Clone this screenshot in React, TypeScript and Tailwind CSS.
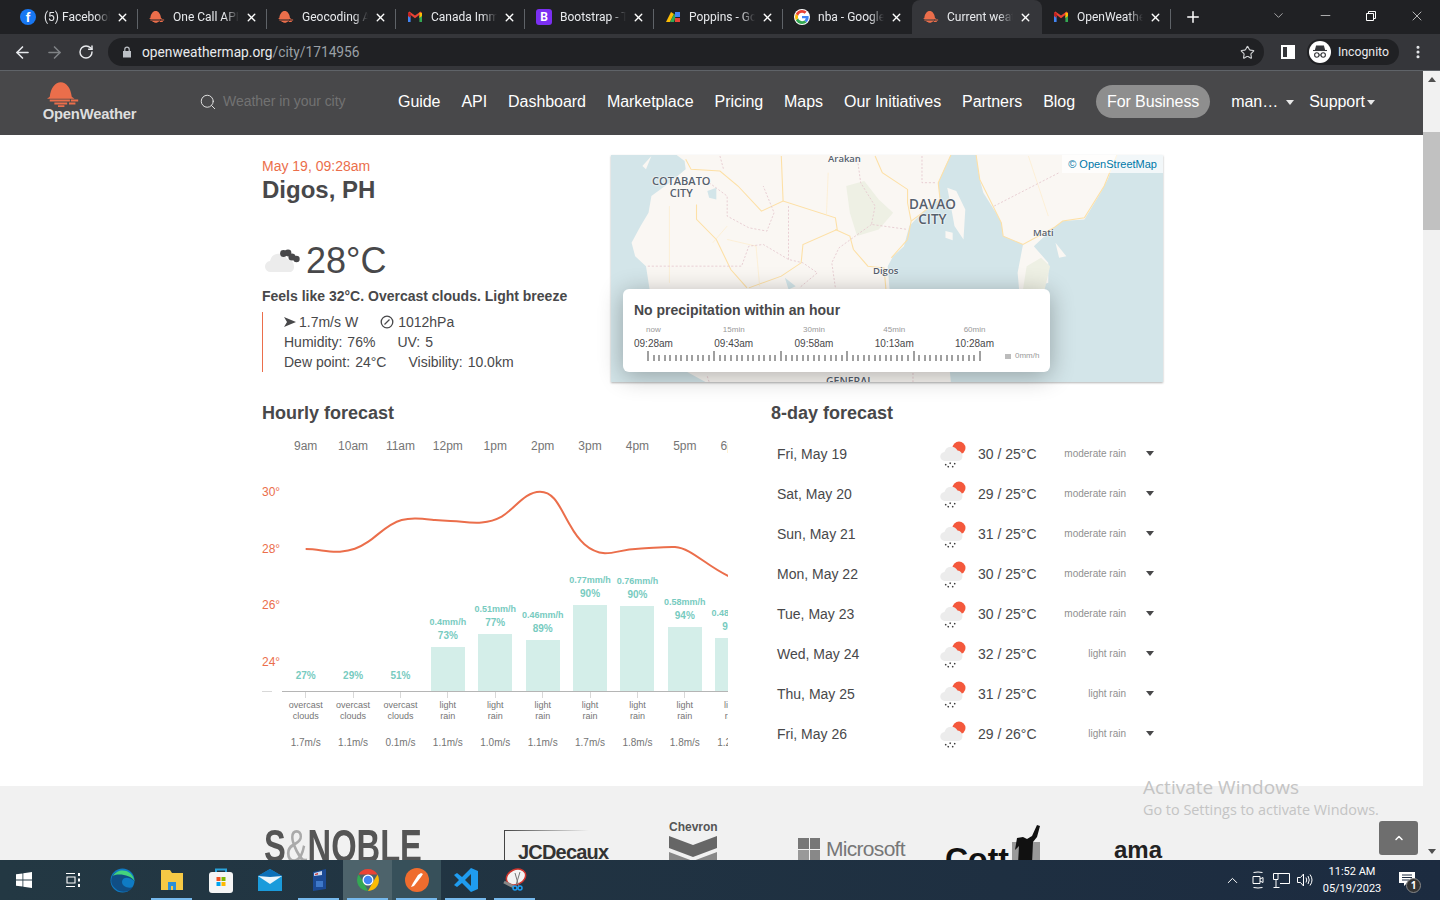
import { ArrowLeft, ArrowRight, RotateCw, Star, X, Plus, ChevronDown, ChevronUp, Minus, Search, EllipsisVertical } from 'lucide-react';

const OW_RED = '#eb6e4b';

function OwMark({ width = 16, height = 16 }: { width?: number; height?: number }) {
  return (
    <svg width={width} height={height} viewBox="0 0 36 27" fill="#eb6e4b">
      <path d="M3 16C4 6 9 0 15 0s11 6 12 16l3 2H0z" />
      <path d="M3 19h22v2.200H3zM26 19h8v2.200h-8zM8 22.300h14v2.200H8zM24 22.300h7v2.200h-7zM12 25.300h7V27h-7z" />
    </svg>
  );
}

function GmailIcon() {
  return (
    <svg width="16" height="16" viewBox="0 0 16 16">
      <path d="M1 4v9h2.6V7z" fill="#4285f4" />
      <path d="M15 4v9h-2.6V7z" fill="#34a853" />
      <path d="M1 4l7 5.2L15 4l-1.3-1.6L8 6.6 2.3 2.4z" fill="#ea4335" />
      <path d="M12.4 3.4L15 4v3l-2.6 2z" fill="#fbbc04" />
      <path d="M3.6 3.4L1 4v3l2.6 2z" fill="#c5221f" />
    </svg>
  );
}

function GoogleIcon() {
  return (
    <svg width="16" height="16" viewBox="0 0 48 48" className="rounded-full bg-white">
      <path d="M44 24.5c0-1.5-.1-2.6-.4-3.8H24v7.3h11.3c-.5 2.8-2 5-4.400 6.500l6.800 5.300C41.700 35.800 44 30.600 44 24.500z" fill="#4285f4" />
      <path d="M24 45c5.700 0 10.500-1.900 13.700-5.200l-6.800-5.300c-1.800 1.300-4.200 2.100-6.900 2.100-5.400 0-9.900-3.600-11.500-8.500l-7 5.400C8.900 40.600 15.900 45 24 45z" fill="#34a853" />
      <path d="M12.500 28.100c-.9-2.700-.9-5.500 0-8.200l-7-5.400c-3 6-3 13 0 19z" fill="#fbbc04" />
      <path d="M24 11.400c3 0 5.700 1 7.800 3l5.900-5.900C34.300 5.300 29.600 3 24 3 15.900 3 8.900 7.400 5.500 14.500l7 5.400c1.600-4.900 6.100-8.500 11.500-8.500z" fill="#ea4335" />
    </svg>
  );
}

const tabs = [
  { title: '(5) Facebook', icon: <div className="flex h-4 w-4 items-end justify-center rounded-full bg-[#1877f2] text-[13px] leading-[14px] font-bold text-white">f</div> },
  { title: 'One Call API', icon: <OwMark /> },
  { title: 'Geocoding API', icon: <OwMark /> },
  { title: 'Canada Immigration', icon: <GmailIcon /> },
  { title: 'Bootstrap - The', icon: <div className="flex h-4 w-4 items-center justify-center rounded-[3px] bg-[#7b2ff2] text-[12px] font-bold text-white">B</div> },
  {
    title: 'Poppins - Google',
    icon: (
      <svg width="16" height="16" viewBox="0 0 16 16">
        <path d="M1 13l5-10 3 2-4 8z" fill="#fbbc04" />
        <path d="M5 13l4-8 2 1-2 7z" fill="#34a853" />
        <path d="M10 3h5v5h-5z" fill="#4285f4" />
        <path d="M10 9h5v4h-5z" fill="#ea4335" />
      </svg>
    ),
  },
  { title: 'nba - Google', icon: <GoogleIcon /> },
  { title: 'Current weather', icon: <OwMark />, active: true },
  { title: 'OpenWeather', icon: <GmailIcon /> },
];

function TabStrip() {
  return (
    <div className="flex h-[34px] shrink-0 items-end bg-[#202124] pl-[9px] text-[#e8eaed]">
      {tabs.map((t, i) => {
        const nextActive = tabs[i + 1]?.active;
        return (
          <div
            key={t.title}
            className={
              t.active
                ? 'flex h-[34px] w-[130px] items-center rounded-t-lg bg-[#35363a] pl-[11px]'
                : 'relative flex h-[34px] w-[129px] items-center pl-[11px]'
            }
          >
            <div className="flex w-4 shrink-0 justify-center">{t.icon}</div>
            <div className="ml-[8px] w-[66px] overflow-hidden whitespace-nowrap text-[12px] [mask-image:linear-gradient(to_right,black_78%,transparent)]">
              {t.title}
            </div>
            <X size={13} strokeWidth={2.6} className="ml-[6px] text-white" />
            {!t.active && !nextActive && <div className="absolute top-[9px] right-0 h-[20px] w-px bg-[#5f6368]" />}
          </div>
        );
      })}
      <div className="flex h-[34px] w-[44px] items-center justify-center">
        <Plus size={18} strokeWidth={2} className="text-white" />
      </div>
      <div className="ml-[56px] flex h-[34px] items-start pt-[8px]">
        <ChevronDown size={15} strokeWidth={1.2} className="text-[#d0d0d0]" />
      </div>
      <div className="ml-[16px] flex h-[34px] w-[46px] items-start justify-center pt-[8px]">
        <Minus size={15} strokeWidth={1} className="text-white" />
      </div>
      <div className="flex h-[34px] w-[46px] items-start justify-center pt-[10px]">
        <svg width="12" height="12" viewBox="0 0 12 12" fill="none" stroke="#fff">
          <path d="M1.500 3.500h7v7h-7zM3.500 3.500v-2h7v7h-2" />
        </svg>
      </div>
      <div className="flex h-[34px] w-[46px] items-start justify-center pt-[8px]">
        <X size={16} strokeWidth={1} className="text-white" />
      </div>
    </div>
  );
}

function Toolbar() {
  return (
    <div className="flex h-[37px] shrink-0 items-center border-b border-[#5f6368] bg-[#35363a]">
      <ArrowLeft size={19} strokeWidth={2} className="ml-[13px] text-[#e8eaed]" />
      <ArrowRight size={19} strokeWidth={2} className="ml-[13px] text-[#7f8285]" />
      <RotateCw size={16} strokeWidth={2.2} className="ml-[14px] text-[#e8eaed]" />
      <div className="ml-[14px] flex h-[28px] w-[1156px] items-center rounded-full bg-[#202124] pl-[14px]">
        <svg width="10" height="12" viewBox="0 0 10 12" fill="#bdc1c6">
          <path d="M1 5h8v6.500H1z" />
          <path d="M2.800 5V3.300a2.200 2.200 0 014.400 0V5" fill="none" stroke="#bdc1c6" strokeWidth="1.200" />
        </svg>
        <span className="ml-[10px] text-[13.75px] text-[#e8eaed]">
          openweathermap.org<span className="text-[#9aa0a6]">/city/1714956</span>
        </span>
        <Star size={15} strokeWidth={1.8} className="mr-[9px] ml-auto text-[#d0d2d4]" />
      </div>
      <div className="ml-[17px] flex h-[14px] w-[14px] justify-end border-2 border-white">
        <div className="w-[6px] bg-white" />
      </div>
      <div className="ml-[12px] flex h-[26px] w-[92px] items-center rounded-full bg-[#202124] pl-[2px]">
        <div className="flex h-[22px] w-[22px] items-center justify-center rounded-full bg-white">
          <svg width="16" height="14" viewBox="0 0 16 14" fill="none" stroke="#35363a" strokeWidth="1.100">
            <path d="M4.500 1h7l1 4h-9z" fill="#35363a" />
            <path d="M1 5.500h14" />
            <circle cx="4.800" cy="10" r="2.200" />
            <circle cx="11.200" cy="10" r="2.200" />
            <path d="M7 10h2" />
          </svg>
        </div>
        <span className="ml-[7px] text-[12.25px] text-[#e8eaed]">Incognito</span>
      </div>
      <EllipsisVertical size={16} strokeWidth={2.6} className="ml-[11px] text-[#e8eaed]" />
    </div>
  );
}

const navLinks = ['Guide', 'API', 'Dashboard', 'Marketplace', 'Pricing', 'Maps', 'Our Initiatives', 'Partners', 'Blog'];

function Caret({ className }: { className: string }) {
  return <div className={`h-0 w-0 border-x-4 border-t-[5px] border-x-transparent ${className}`} />;
}

function NavBar() {
  return (
    <div className="flex h-[64px] shrink-0 items-center bg-[#48484a] pb-[3px] text-[16px] tracking-[-0.05px] text-white">
      <div className="ml-[42px] flex w-[95px] flex-col items-start">
        <div className="ml-[5px]">
          <OwMark width={33} height={25} />
        </div>
        <div className="w-full text-center text-[14.8px] leading-[14px] font-bold tracking-[-0.2px] text-[#dedede]">OpenWeather</div>
      </div>
      <Search size={18} strokeWidth={1.3} className="ml-[62px] text-[#e0e0e0]" />
      <div className="ml-[6px] w-[175px] text-[14px] text-[#727272]">Weather in your city</div>
      <div className="flex items-center gap-[21px]">
        {navLinks.map((l) => (
          <span key={l}>{l}</span>
        ))}
        <span className="rounded-full bg-[#8e8e8e] px-[11px] py-[6px] leading-[21px] tracking-[-0.1px]">For Business</span>
        <span className="w-[47px]">man…</span>
      </div>
      <Caret className="ml-[8px] mt-[2px] border-t-[#e8e8e8]" />
      <span className="ml-[15px]">Support</span>
      <Caret className="ml-[2px] mt-[2px] border-t-[#e8e8e8]" />
    </div>
  );
}

function OvercastIcon() {
  return (
    <svg width="38" height="26" viewBox="0 0 38 26">
      <path d="M7 24a5.500 5.500 0 01-1-11 9 9 0 0117-2 7 7 0 017 7 6 6 0 01-3 6z" fill="#ececec" />
      <g fill="#48484a">
        <circle cx="19.500" cy="5.500" r="3.400" />
        <circle cx="24" cy="5" r="3.400" />
        <circle cx="28" cy="9" r="3.600" />
        <circle cx="32.500" cy="11" r="3.200" />
      </g>
    </svg>
  );
}

function RainIcon() {
  return (
    <svg width="27" height="27" viewBox="0 0 27 27">
      <circle cx="20" cy="7" r="6.500" fill="#f4583c" />
      <path d="M6 20a4.500 4.500 0 01-.5-9 7 7 0 0113-1.500 5.500 5.500 0 015 5.500 5 5 0 01-4.500 5z" fill="#ececec" />
      <path d="M7 23l-.6 1.400M11.500 21.500l-.6 1.400M16 22l-.6 1.400M9.500 25l-.6 1.400M14 25l-.6 1.400" stroke="#333" strokeWidth="1.400" />
    </svg>
  );
}

function MapPanel() {
  const label = "absolute font-['Open_Sans',sans-serif] font-semibold text-[#56606c] [text-shadow:0_0_2px_#fff,0_0_2px_#fff]";
  return (
    <div className="relative mt-[20px] h-[227px] w-[552px] shadow-[0_1px_2px_rgba(0,0,0,0.3)]">
      <div className="absolute inset-0 overflow-hidden bg-[#d3e5e9]">
        <svg className="absolute inset-0 h-full w-full blur-[0.3px]" viewBox="18 17 1530 680" preserveAspectRatio="none" fill="none">
          <path d="M200 17L222 35 225 60 180 100 130 140 122 190 100 230 75 280 85 320 115 350 125 420 150 560 200 650 280 697H960L955 640 1000 560 880 480 790 420 785 350 800 320 830 290 845 230 885 185 930 150 925 100 945 50 960 17z" fill="#faf7f3" />
          <path d="M1030 17L1040 90 1050 130 1085 190 1100 220 1105 260 1160 285 1145 370 1150 430 1230 400 1230 340 1190 290 1245 235 1270 215 1330 210 1375 130 1395 90 1420 17z" fill="#faf7f3" />
          <path d="M950 115L975 125 1000 180 995 270 970 230 960 170zM945 245L965 250 965 272 945 265zM105 50L130 20 115 60zM1250 280L1280 320 1260 325z" fill="#faf7f3" />
          <path d="M670 110L720 95 760 150 800 190 760 240 700 260 680 190z" fill="#eef0e4" />
          <path d="M1170 350L1210 325 1235 350 1220 420 1160 420z" fill="#eef0e4" />
          <path d="M285 125L310 115 310 150 290 145zM500 385L530 410 510 420z" fill="#d3e5e9" />
          <g stroke="#fde0a6" strokeWidth="3">
            <path d="M225 30L240 60 320 65 370 110 435 185 495 155 640 205 645 240 550 285 545 340 490 380 400 415" />
            <path d="M255 165V210L310 270 350 360 395 415" />
            <path d="M490 20L495 155M640 240L680 260 690 300 730 350 775 355 780 420" />
            <path d="M750 20L770 70 840 120 840 160 850 215 840 270 795 325" />
            <path d="M850 215L930 150 925 100 960 17" />
            <path d="M1030 17L1040 90 1100 220 1105 260 1160 285 1245 235 1270 215 1330 205 1385 110 1420 17" />
          </g>
          <g stroke="#fdeccb" strokeWidth="2">
            <path d="M180 170V400M340 230L300 280M340 270L420 290 430 410M620 70L615 200M1175 20L1230 200M650 670L660 697" />
          </g>
          <g stroke="#e6c9cf" strokeWidth="2.500" strokeDasharray="6 5">
            <path d="M320 20L330 60M290 100L340 140 340 200 400 235 450 245 470 190 440 110" />
            <path d="M120 350H380L400 290 440 285 510 330 550 340 590 370 540 415M510 170V330" />
            <path d="M880 20V100H920M1080 170L1260 70M700 20L710 100 750 170 740 225 840 240M740 225L650 295 630 340 640 415M285 680L290 697M855 670V697" />
          </g>
        </svg>
        <div className={`${label} top-[-3px] left-[217px] text-[9.5px]`}>Arakan</div>
        <div className={`${label} top-[20px] left-[41px] text-center text-[11px] leading-[12px]`}>
          COTABATO
          <br />
          CITY
        </div>
        <div className={`${label} top-[42px] left-[298px] text-center text-[13.5px] leading-[15px]`}>
          DAVAO
          <br />
          CITY
        </div>
        <div className={`${label} top-[71px] left-[422px] text-[9.5px]`}>Mati</div>
        <div className={`${label} top-[109px] left-[262px] text-[9.5px]`}>Digos</div>
        <div className={`${label} top-[219px] left-[215px] text-[10.5px]`}>GENERAL</div>
        <div className="absolute top-0 right-0 bg-white/70 px-[6px] py-[1px] text-[11px] leading-[16px] text-[#0078a8]">© OpenStreetMap</div>
      </div>
      <div className="absolute top-[134px] left-[12px] h-[83px] w-[427px] rounded-md bg-white pt-[11px] pl-[11px] shadow-[0_4px_24px_rgba(0,0,0,0.3)]">
        <div className="text-[14px] leading-[20px] font-bold text-[#48484a]">No precipitation within an hour</div>
        <div className="mt-[5px] flex w-[360px] justify-between">
          {[
            ['now', '09:28am'],
            ['15min', '09:43am'],
            ['30min', '09:58am'],
            ['45min', '10:13am'],
            ['60min', '10:28am'],
          ].map(([a, b]) => (
            <div key={a} className="flex flex-col items-center">
              <div className="text-[8px] leading-[10px] text-[#999]">{a}</div>
              <div className="mt-[3px] text-[10px] leading-[12px] text-[#48484a]">{b}</div>
            </div>
          ))}
        </div>
        <div className="mt-px flex items-end">
          <div className="ml-[13px] flex h-[10px] w-[334px] items-end justify-between">
            {Array.from({ length: 61 }, (_, i) => (
              <div key={i} className={i % 12 === 0 ? 'h-[10px] w-[2px] bg-[#a0a0a0]' : 'h-[6px] w-[2px] bg-[#a0a0a0]'} />
            ))}
          </div>
          <div className="ml-[24px] h-[5px] w-[6px] self-center bg-[#bcbcbc]" />
          <div className="ml-[4px] text-[8px] leading-[10px] text-[#999]">0mm/h</div>
        </div>
      </div>
    </div>
  );
}

const hours = [
  { t: '9am', d: ['overcast', 'clouds'], w: '1.7m/s', p: '27%', rain: '', h: 4 },
  { t: '10am', d: ['overcast', 'clouds'], w: '1.1m/s', p: '29%', rain: '', h: 4 },
  { t: '11am', d: ['overcast', 'clouds'], w: '0.1m/s', p: '51%', rain: '', h: 4 },
  { t: '12pm', d: ['light', 'rain'], w: '1.1m/s', p: '73%', rain: '0.4mm/h', h: 44 },
  { t: '1pm', d: ['light', 'rain'], w: '1.0m/s', p: '77%', rain: '0.51mm/h', h: 57 },
  { t: '2pm', d: ['light', 'rain'], w: '1.1m/s', p: '89%', rain: '0.46mm/h', h: 51 },
  { t: '3pm', d: ['light', 'rain'], w: '1.7m/s', p: '90%', rain: '0.77mm/h', h: 86 },
  { t: '4pm', d: ['light', 'rain'], w: '1.8m/s', p: '90%', rain: '0.76mm/h', h: 85 },
  { t: '5pm', d: ['light', 'rain'], w: '1.8m/s', p: '94%', rain: '0.58mm/h', h: 64 },
  { t: '6pm', d: ['light', 'rain'], w: '1.2m/s', p: '92%', rain: '0.48mm/h', h: 53 },
];

function HourlyChart() {
  return (
    <div className="relative mt-[11px] w-[466px]">
      <div className="ml-[20px] w-[446px] overflow-hidden">
        <div className="flex w-[474px]">
          {hours.map((h) => (
            <div key={h.t} className="flex w-[47.4px] shrink-0 flex-col items-center text-[#757575]">
              <div className="h-[20px] text-[12px] leading-[20px]">{h.t}</div>
              <div className="flex h-[235px] w-full flex-col items-center justify-end text-[10px] leading-[14px] font-bold whitespace-nowrap text-[#78cbbf]">
                {h.rain && <div className="text-[9px]">{h.rain}</div>}
                <div className="mb-[4px]">{h.p}</div>
                <div style={{ height: h.h }} className={h.rain ? 'w-[34px] bg-[#d4eee9]' : 'w-[34px]'} />
              </div>
              <div className="w-full border-t border-[#b5b5b5]" />
              <div className="h-[6px] w-px bg-[#d8d8d8]" />
              <div className="mt-[2px] h-[24px] text-center text-[9px] leading-[11px]">
                {h.d[0]}
                <br />
                {h.d[1]}
              </div>
              <div className="mt-[13px] text-[10px] leading-[12px]">{h.w}</div>
            </div>
          ))}
        </div>
      </div>
      {[
        ['30°', 'top-[48px]'],
        ['28°', 'top-[105px]'],
        ['26°', 'top-[161px]'],
        ['24°', 'top-[218px]'],
      ].map(([v, c]) => (
        <div key={v} className={`absolute left-0 text-[12px] leading-[16px] text-[#eb6e4b] ${c}`}>
          {v}
        </div>
      ))}
      <div className="absolute top-[255px] left-0 h-px w-[10px] bg-[#d8d8d8]" />
      <svg className="absolute top-0 left-0" width="466" height="264" viewBox="21 18 1398 792" fill="none">
        <path
          d="M152 357C190 357 220 368 255 365C290 362 310 355 340 335C370 315 400 280 440 270C470 262 500 266 540 270C580 274 590 272 620 275C660 280 700 282 740 260C780 235 810 185 855 185C900 185 915 235 945 285C970 330 1000 365 1050 370C1085 370 1100 358 1150 356C1190 355 1220 350 1260 351C1310 355 1350 405 1420 438"
          stroke={OW_RED}
          strokeWidth="6"
        />
      </svg>
    </div>
  );
}

const days = [
  ['Fri, May 19', '30 / 25°C', 'moderate rain'],
  ['Sat, May 20', '29 / 25°C', 'moderate rain'],
  ['Sun, May 21', '31 / 25°C', 'moderate rain'],
  ['Mon, May 22', '30 / 25°C', 'moderate rain'],
  ['Tue, May 23', '30 / 25°C', 'moderate rain'],
  ['Wed, May 24', '32 / 25°C', 'light rain'],
  ['Thu, May 25', '31 / 25°C', 'light rain'],
  ['Fri, May 26', '29 / 26°C', 'light rain'],
];

function DailyList() {
  return (
    <div className="mt-[9px]">
      {days.map(([day, temp, desc]) => (
        <div key={day} className="flex h-[40px] items-center text-[14px] text-[#48484a]">
          <div className="ml-[6px] w-[162px]">{day}</div>
          <RainIcon />
          <div className="ml-[12px] w-[86px]">{temp}</div>
          <div className="mb-[2px] w-[62px] text-right text-[10px] whitespace-nowrap text-[#8f8f8f]">{desc}</div>
          <Caret className="mb-[2px] ml-[20px] border-t-[#48484a]" />
        </div>
      ))}
    </div>
  );
}

function CurrentWeather() {
  return (
    <div className="w-[349px] pt-[21px]">
      <div className="text-[14px] leading-[20px] text-[#eb6e4b]">May 19, 09:28am</div>
      <div className="text-2xl leading-[28px] font-bold text-[#48484a]">Digos, PH</div>
      <div className="mt-[37px] flex h-[40px] items-center">
        <div className="ml-[2px]">
          <OvercastIcon />
        </div>
        <div className="ml-[4px] text-[36px] text-[#48484a]">28°C</div>
      </div>
      <div className="mt-[5px] text-[14px] leading-[20px] font-bold whitespace-nowrap text-[#48484a]">Feels like 32°C. Overcast clouds. Light breeze</div>
      <div className="mt-[6px] border-l border-[#eb6e4b] pl-[21px] text-[14px] leading-[20px] text-[#48484a]">
        <div className="flex items-center">
          <svg width="12" height="10" viewBox="0 0 12 10" fill="#48484a">
            <path d="M0 0l12 5-12 5 3-5z" />
          </svg>
          <span className="ml-[3px]">1.7m/s W</span>
          <svg className="ml-[22px]" width="14" height="14" viewBox="0 0 14 14" fill="none" stroke="#48484a" strokeWidth="1.300">
            <circle cx="7" cy="7" r="5.800" />
            <path d="M4.500 9.500L9.500 4.500" />
          </svg>
          <span className="ml-[4px]">1012hPa</span>
        </div>
        <div className="flex">
          <span>Humidity:</span>
          <span className="ml-[5px]">76%</span>
          <span className="ml-[22px]">UV:</span>
          <span className="ml-[5px]">5</span>
        </div>
        <div className="flex">
          <span>Dew point:</span>
          <span className="ml-[5px]">24°C</span>
          <span className="ml-[22px]">Visibility:</span>
          <span className="ml-[5px]">10.0km</span>
        </div>
      </div>
    </div>
  );
}

function Partners() {
  return (
    <div className="flex min-h-0 flex-1 overflow-hidden bg-[#f1f1f1]">
      <div className="mt-[35px] ml-[264px] w-[240px] text-[46px] leading-[50px] font-bold whitespace-nowrap text-[#555]">
        <div className="origin-left scale-x-[.71]">
          S<span className="font-normal text-[#aaa]">&amp;</span>NOBLE
        </div>
      </div>
      <div className="mt-[44px] h-[40px] w-[165px]">
        <div className="h-px w-[85px] bg-linear-to-r from-[#444] to-transparent" />
        <div className="h-full border-l border-[#444] pt-[10px] pl-[13px] text-[20px] leading-[22px] font-bold tracking-[-0.8px] whitespace-nowrap text-[#333]">JCDecaux</div>
      </div>
      <div className="mt-[35px] w-[129px]">
        <div className="text-[12px] leading-[13px] font-bold text-[#555]">Chevron</div>
        <svg width="48" height="30" viewBox="0 0 48 30">
          <path d="M0 2l24 9 24-9v12l-24 9-24-9z" fill="#666" />
          <path d="M0 18l24 9 24-9v12H0z" fill="#888" />
        </svg>
      </div>
      <div className="mt-[52px] flex w-[147px] items-start">
        <div className="grid h-[22px] w-[22px] shrink-0 grid-cols-2 gap-px">
          <div className="bg-[#777]" />
          <div className="bg-[#777]" />
          <div className="bg-[#999]" />
          <div className="bg-[#888]" />
        </div>
        <div className="ml-[6px] text-[21px] leading-[22px] tracking-[-0.7px] text-[#777]">Microsoft</div>
      </div>
      <div className="relative mt-[55px] w-[169px] text-[32px] leading-[36px] font-bold text-[#111]">
        Cott
        <svg className="absolute top-[-17px] left-[64px]" width="40" height="40" viewBox="0 0 40 40">
          <rect x="3" y="18" width="28" height="22" fill="#999" />
          <path d="M28 1l3 1-3 11-4 5-1 22H9l1-18-4 4 2-12 6-1 4 2 5-3z" fill="#111" />
        </svg>
      </div>
      <div className="mt-[50px] text-[24px] leading-[28px] font-bold text-[#222]">ama</div>
    </div>
  );
}

function Scrollbar() {
  return (
    <div className="flex w-[17px] shrink-0 flex-col items-center bg-[#f1f1f1]">
      <div className="flex h-[17px] items-center">
        <div className="h-0 w-0 border-x-4 border-b-[5px] border-x-transparent border-b-[#505050]" />
      </div>
      <div className="mt-[44px] h-[98px] w-full bg-[#c1c1c1]" />
      <div className="mb-[6px] mt-auto h-0 w-0 border-x-4 border-t-[5px] border-x-transparent border-t-[#505050]" />
    </div>
  );
}

function TaskIcon({ children, state }: { children: React.ReactNode; state?: 'on' | 'open' | 'hot' }) {
  const bg = state === 'hot' ? 'bg-[#4d636b]' : state === 'on' ? 'bg-[#37505a]' : '';
  return (
    <div className={`relative flex h-full w-[49px] items-center justify-center ${bg}`}>
      {children}
      {state && <div className="absolute right-[4px] bottom-0 left-[4px] h-[2px] bg-[#76b9ed]" />}
    </div>
  );
}

function Taskbar() {
  return (
    <div className="flex h-[40px] shrink-0 items-center bg-linear-to-r from-[#233843] to-[#1c2b40] text-white">
      <div className="flex h-full w-[49px] items-center justify-center pr-[2px]">
        <svg width="16" height="16" viewBox="0 0 16 16" fill="#fff">
          <path d="M0 2.300l6.500-.9v6.200H0zM7.300 1.300L16 0v7.600H7.300zM0 8.400h6.500v6.200L0 13.700zM7.300 8.400H16V16l-8.700-1.200z" />
        </svg>
      </div>
      <TaskIcon>
        <svg width="16" height="16" viewBox="0 0 16 16" fill="none" stroke="#fff" strokeWidth="1.100">
          <path d="M0 1.500h9M0 14.500h9M1 5h8v6H1z" />
          <path d="M13 1v3M13 6.500v3M13 12v3" strokeWidth="2" />
        </svg>
      </TaskIcon>
      <TaskIcon>
        <svg width="25" height="25" viewBox="0 0 25 25">
          <circle cx="12.500" cy="12.500" r="12" fill="#0f7bc4" />
          <path d="M2 9C5 1 21 0 24 13c-5-5-12-4-12 1 0 4 6 7 11 5-4 6-13 6-17 2C2 18 0 14 2 9z" fill="#113c6b" opacity=".7" />
          <path d="M3 8C7 0 22 0 24.500 13 21 7 8 5 3 8z" fill="#44d27d" />
        </svg>
      </TaskIcon>
      <TaskIcon state="open">
        <svg width="22" height="20" viewBox="0 0 22 20">
          <path d="M0 0h9l2 3h11v17H0z" fill="#f6c945" />
          <path d="M7 12h8v8h-3v-4h-2v4H7z" fill="#2b8fd8" />
        </svg>
      </TaskIcon>
      <TaskIcon>
        <svg width="24" height="26" viewBox="0 0 24 26">
          <path d="M7 6V2.500h10V6" fill="none" stroke="#2aa4dc" strokeWidth="2" />
          <rect y="5" width="24" height="21" rx="3" fill="#f5f5f5" />
          <path d="M7.500 10h4v4h-4z" fill="#f25022" />
          <path d="M12.500 10h4v4h-4z" fill="#7fba00" />
          <path d="M7.500 15h4v4h-4z" fill="#00a4ef" />
          <path d="M12.500 15h4v4h-4z" fill="#ffb900" />
        </svg>
      </TaskIcon>
      <TaskIcon>
        <svg width="24" height="22" viewBox="0 0 24 22">
          <path d="M0 7L12 0l12 7v15H0z" fill="#1a9bdb" />
          <path d="M0 7l12 8 12-8-12-1z" fill="#e9f4fb" />
          <path d="M0 7L12 0l12 7-12 1z" fill="#0a6fb8" />
        </svg>
      </TaskIcon>
      <TaskIcon state="open">
        <svg width="14" height="22" viewBox="0 0 14 22">
          <path d="M1 3l13-3v20L1 22z" fill="#1c4a94" />
          <path d="M2 4l8-2v4l-8 1z" fill="#c8d6f0" />
          <path d="M3 5l3-1v1.500L3 6z" fill="#d0342c" />
          <path d="M4 12h7v6H4z" fill="#3f78c8" />
        </svg>
      </TaskIcon>
      <TaskIcon state="hot">
        <svg width="24" height="24" viewBox="0 0 48 48">
          <path d="M24 2a22 22 0 0119 11H24z" fill="#ea4335" />
          <path d="M43 13a22 22 0 01-19 33l10-18z" fill="#fbbc04" />
          <path d="M24 46A22 22 0 015 13l10 15z" fill="#34a853" />
          <path d="M5 13A22 22 0 0124 2v11z" fill="#ea4335" />
          <circle cx="24" cy="24" r="11" fill="#fff" />
          <circle cx="24" cy="24" r="8.500" fill="#4285f4" />
        </svg>
      </TaskIcon>
      <TaskIcon state="on">
        <svg width="24" height="24" viewBox="0 0 24 24">
          <circle cx="12" cy="12" r="12" fill="#ef6c2e" />
          <path d="M6 19l3-1 7-9 2-3-2-1-3 2-5 8z" fill="#fff" />
        </svg>
      </TaskIcon>
      <TaskIcon state="open">
        <svg width="24" height="24" viewBox="0 0 24 24">
          <path d="M17 0l7 3v18l-7 3-9-9-5 4-3-2 5-5-5-5 3-2 5 4z" fill="#1f9cf0" />
          <path d="M17 6l-6 6 6 6z" fill="#233843" />
        </svg>
      </TaskIcon>
      <TaskIcon state="open">
        <svg width="24" height="24" viewBox="0 0 24 24" fill="none">
          <ellipse cx="13" cy="9" rx="10" ry="7.500" transform="rotate(-25 13 9)" fill="#f3f3f3" stroke="#d0342c" strokeWidth="1.500" />
          <path d="M1 14l10 5" stroke="#888" strokeWidth="3" />
          <path d="M12 5l4 14M17 4l-4 13" stroke="#777" />
          <circle cx="17" cy="20" r="2" stroke="#1f9cf0" strokeWidth="1.500" />
          <circle cx="12" cy="20" r="2" stroke="#1f9cf0" strokeWidth="1.500" />
        </svg>
      </TaskIcon>
      <ChevronUp size={17} strokeWidth={1.4} className="ml-[685px]" />
      <svg className="ml-[9px]" width="16" height="18" viewBox="0 0 16 18" fill="none" stroke="#fff">
        <path d="M3.500 1.500q4.500-1 9 0M3.500 16.500q4.500 1 9 0M3 5.500h7v7H3zM10 8l3-1.500v5L10 10" />
      </svg>
      <svg className="ml-[7px]" width="17" height="15" viewBox="0 0 17 15" fill="none" stroke="#fff">
        <path d="M.5.500h16v10H7M5 .500v6H.500v-6M3 7v7M.5 14.500h6" />
      </svg>
      <svg className="ml-[7px]" width="16" height="14" viewBox="0 0 16 14" fill="none" stroke="#fff">
        <path d="M.5 4.500h3l3-3.500v12l-3-3.500h-3zM9 4.500q1.500 2.500 0 5M11 3q2.500 4 0 8M13 1.500q4 5.500 0 11" />
      </svg>
      <div className="ml-[7px] flex w-[64px] flex-col items-center font-['Roboto',sans-serif] text-[11px] leading-[17px]">
        <span>11:52 AM</span>
        <span>05/19/2023</span>
      </div>
      <div className="relative ml-[15px] h-[18px] w-[16px]">
        <svg width="16" height="16" viewBox="0 0 16 16">
          <path d="M0 1h16v11h-8l-3 3v-3H0z" fill="#fff" />
          <path d="M3 4h10M3 6.500h10M3 9h7" stroke="#1c2b40" />
        </svg>
        <div className="absolute top-[7px] left-[7px] flex h-[15px] w-[15px] items-center justify-center rounded-full border border-[#888] bg-[#333] text-[10px] font-bold">1</div>
      </div>
    </div>
  );
}

export default function App() {
  return (
    <div className="relative flex h-[900px] w-[1440px] flex-col overflow-hidden bg-white font-['Liberation_Sans',Arial,sans-serif]">
      <div className="font-['Roboto',sans-serif]">
        <TabStrip />
        <Toolbar />
      </div>

      <div className="flex min-h-0 flex-1">
        <div className="flex w-[1423px] flex-col">
          <NavBar />

          {/* Page content */}
          <div className="h-[651px] shrink-0 pl-[262px]">
            <div className="flex h-[248px]">
              <CurrentWeather />
              <MapPanel />
            </div>
            <div className="mt-[18px] flex">
              <div className="w-[509px]">
                <h3 className="text-[18px] leading-[24px] font-bold text-[#48484a]">Hourly forecast</h3>
                <HourlyChart />
              </div>
              <div className="w-[392px]">
                <h3 className="text-[18px] leading-[24px] font-bold text-[#48484a]">8-day forecast</h3>
                <DailyList />
              </div>
            </div>
          </div>

          <Partners />
        </div>
        <Scrollbar />
      </div>

      <div className="font-['Open_Sans',sans-serif]">
        <Taskbar />
      </div>

      {/* Overlays */}
      <div className="absolute top-[775px] left-[1143px] font-['Open_Sans',sans-serif] text-[#c4c4c4]">
        <div className="text-[19px] leading-[24px]">Activate Windows</div>
        <div className="text-[14.4px] leading-[22px] whitespace-nowrap">Go to Settings to activate Windows.</div>
      </div>
      <div className="absolute top-[821px] left-[1379px] flex h-[34px] w-[39px] items-center justify-center rounded-[3px] bg-[#6e6e6e]">
        <ChevronUp size={12} strokeWidth={3} className="text-white" />
      </div>
    </div>
  );
}
